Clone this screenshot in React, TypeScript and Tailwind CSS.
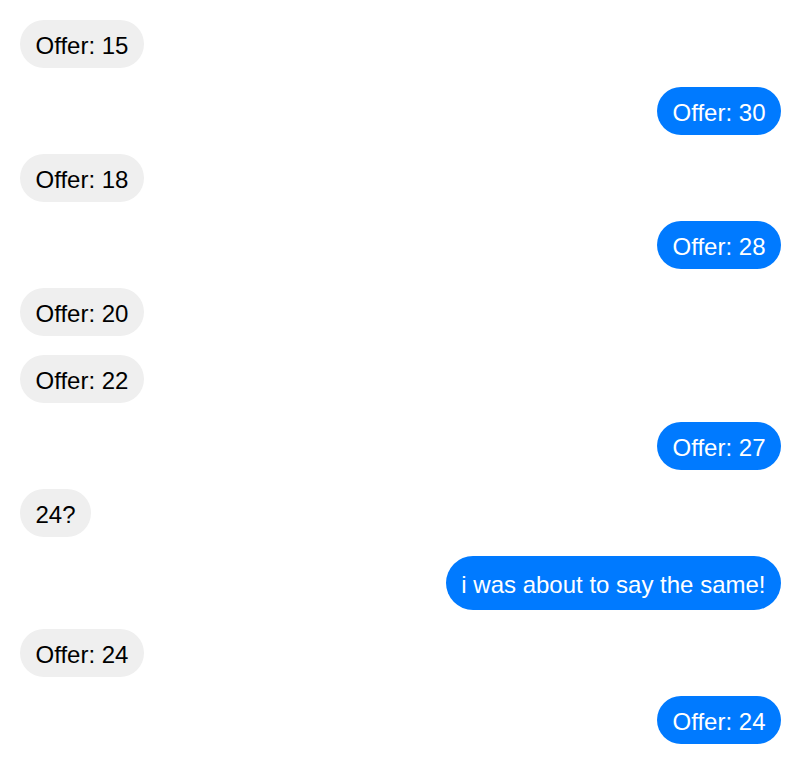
const messages = [
  { text: "Offer: 15", mine: false },
  { text: "Offer: 30", mine: true },
  { text: "Offer: 18", mine: false },
  { text: "Offer: 28", mine: true },
  { text: "Offer: 20", mine: false },
  { text: "Offer: 22", mine: false },
  { text: "Offer: 27", mine: true },
  { text: "24?", mine: false },
  { text: "i was about to say the same!", mine: true, tall: true },
  { text: "Offer: 24", mine: false },
  { text: "Offer: 24", mine: true },
];

export default function App() {
  return (
    <div className="min-h-screen bg-white py-5 pl-5 pr-[19px] font-['Liberation_Sans',Arial,sans-serif]">
      <div className="flex flex-col gap-[19px]">
        {messages.map((m, i) => (
          <div key={i} className={m.mine ? "flex justify-end" : "flex justify-start"}>
            <div
              className={`rounded-full px-[15.5px] text-[24px] leading-[27px] ${
                m.tall ? "pt-[15px] pb-[12px]" : "pt-[12px] pb-[9px]"
              } ${m.mine ? "bg-[#007aff] text-white" : "bg-[#efefef] text-black"}`}
            >
              {m.text}
            </div>
          </div>
        ))}
      </div>
    </div>
  );
}
